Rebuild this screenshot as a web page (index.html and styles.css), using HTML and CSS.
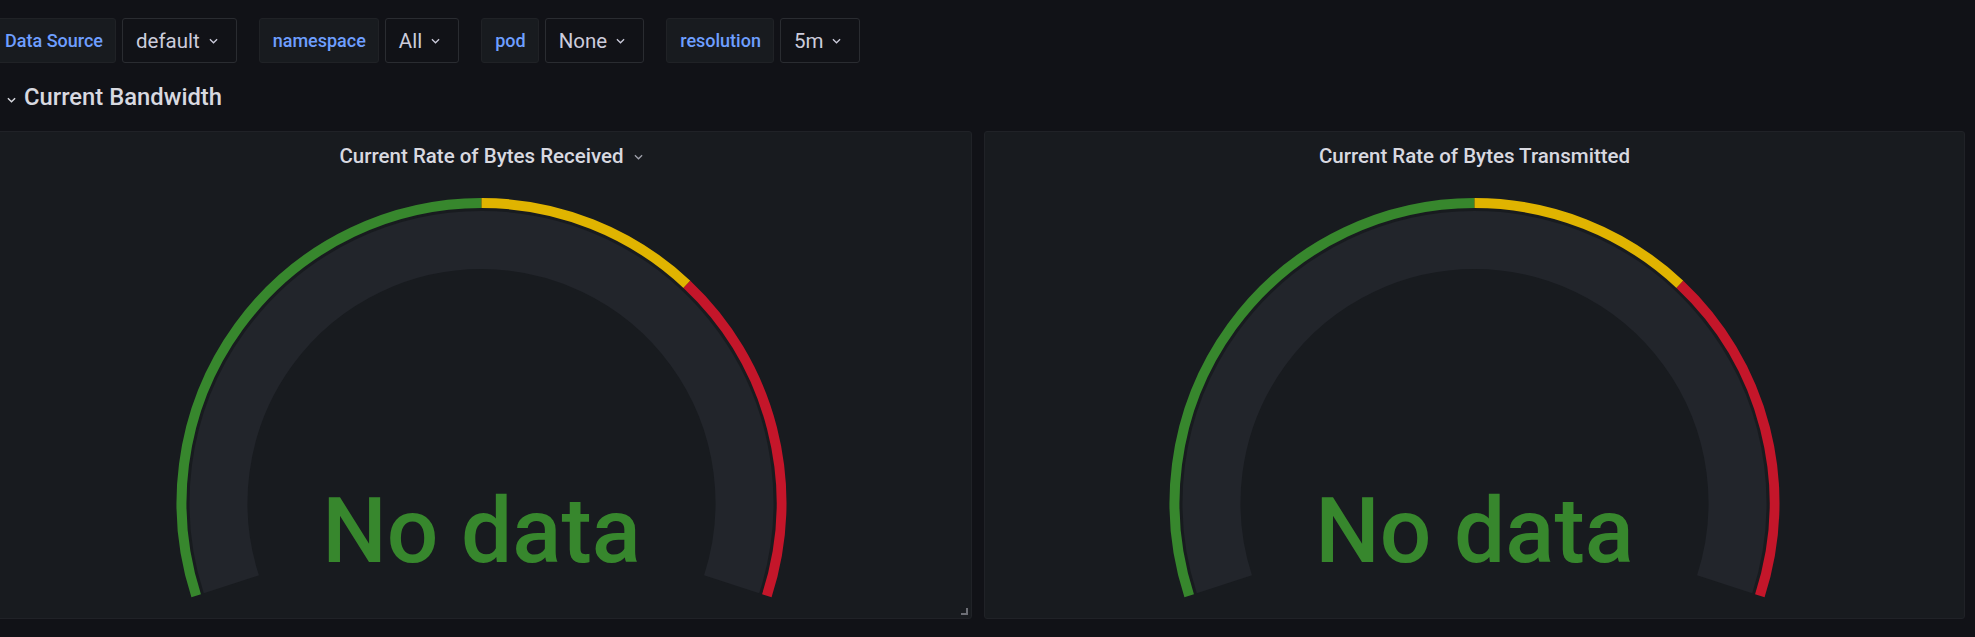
FILE: index.html
```html
<!DOCTYPE html>
<html lang="en">
<head>
<meta charset="utf-8">
<title>Current Bandwidth</title>
<link rel="stylesheet" href="styles.css">
</head>
<body>
<div class="page">
  <div class="vars">
    <div class="var-group">
      <span class="var-label">Data Source</span>
      <span class="var-value">default<svg class="chev" viewBox="0 0 10 6"><polyline points="1,1 5,5 9,1"/></svg></span>
    </div>
    <div class="var-group">
      <span class="var-label">namespace</span>
      <span class="var-value">All<svg class="chev" viewBox="0 0 10 6"><polyline points="1,1 5,5 9,1"/></svg></span>
    </div>
    <div class="var-group">
      <span class="var-label">pod</span>
      <span class="var-value">None<svg class="chev" viewBox="0 0 10 6"><polyline points="1,1 5,5 9,1"/></svg></span>
    </div>
    <div class="var-group">
      <span class="var-label">resolution</span>
      <span class="var-value">5m<svg class="chev" viewBox="0 0 10 6"><polyline points="1,1 5,5 9,1"/></svg></span>
    </div>
  </div>

  <div class="row-header">
    <svg class="row-chev" viewBox="0 0 10 6"><polyline points="1,1 5,5 9,1"/></svg>
    <span class="row-title">Current Bandwidth</span>
  </div>

  <div class="panels">
    <section class="panel">
      <header class="panel-header">
        <span class="panel-title">Current Rate of Bytes Received<svg class="title-chev" viewBox="0 0 10 6"><polyline points="1,1 5,5 9,1"/></svg></span>
      </header>
      <div class="panel-body">
        <svg class="gauge" viewBox="0 0 981 447" width="981" height="447">
          <path class="g-bg" d="M240.37 413.27 A263 263 0 1 1 740.63 413.27"/>
          <path class="g-green" d="M205.18 424.71 A300 300 0 0 1 490.5 32"/>
          <path class="g-yellow" d="M490.5 32 A300 300 0 0 1 695.87 113.31"/>
          <path class="g-red" d="M695.87 113.31 A300 300 0 0 1 775.82 424.71"/>
          <text class="g-text" x="490.5" y="391" text-anchor="middle">No data</text>
        </svg>
      </div>
      <span class="resize-handle"></span>
    </section>
    <section class="panel">
      <header class="panel-header">
        <span class="panel-title">Current Rate of Bytes Transmitted</span>
      </header>
      <div class="panel-body">
        <svg class="gauge" viewBox="0 0 981 447" width="981" height="447">
          <path class="g-bg" d="M240.37 413.27 A263 263 0 1 1 740.63 413.27"/>
          <path class="g-green" d="M205.18 424.71 A300 300 0 0 1 490.5 32"/>
          <path class="g-yellow" d="M490.5 32 A300 300 0 0 1 695.87 113.31"/>
          <path class="g-red" d="M695.87 113.31 A300 300 0 0 1 775.82 424.71"/>
          <text class="g-text" x="490.5" y="391" text-anchor="middle">No data</text>
        </svg>
      </div>
    </section>
  </div>
</div>
</body>
</html>
```

FILE: styles.css
```css
html, body {
  margin: 0;
  padding: 0;
  background: #111217;
  overflow: hidden;
}

body {
  font-family: Roboto, "Liberation Sans", sans-serif;
  color: #ccccdc;
  width: 1975px;
  height: 637px;
}

.page {
  margin-left: -9px;
  width: 1974px;
  padding-top: 18px;
}

/* variables bar */
.vars {
  display: flex;
  gap: 22px;
  height: 45px;
}

.var-group {
  display: flex;
  gap: 6px;
  height: 45px;
}

.var-label {
  display: flex;
  align-items: center;
  box-sizing: border-box;
  height: 45px;
  padding: 0 12px 0 13px;
  background: #181b1f;
  border: 1px solid #202226;
  border-radius: 3px;
  color: #6e9fff;
  font-size: 18px;
  font-weight: 500;
}

.var-value {
  display: flex;
  align-items: center;
  box-sizing: border-box;
  height: 45px;
  padding: 0 18px 0 13px;
  background: #111217;
  border: 1px solid #2a2c31;
  border-radius: 3px;
  color: #ccccdc;
  font-size: 20.5px;
  font-weight: 400;
}

.chev {
  width: 9px;
  height: 6px;
  margin-left: 9px;
  fill: none;
  stroke: #ccccdc;
  stroke-width: 1.4;
}

/* row header */
.row-header {
  display: flex;
  align-items: center;
  margin-top: 20px;
  height: 28px;
  padding-left: 16px;
}

.row-chev {
  width: 9px;
  height: 6px;
  margin-top: 6px;
  margin-right: 8px;
  fill: none;
  stroke: #d8d9e0;
  stroke-width: 1.6;
}

.row-title {
  font-size: 23.8px;
  line-height: 28px;
  font-weight: 500;
  color: #d8d9e0;
}

/* panels */
.panels {
  display: grid;
  grid-template-columns: 981px 981px;
  gap: 12px;
  margin-top: 20px;
}

.panel {
  position: relative;
  box-sizing: border-box;
  height: 488px;
  display: flex;
  flex-direction: column;
  background: #181b1f;
  border: 1px solid #202227;
  border-radius: 3px;
}

.panel-header {
  box-sizing: border-box;
  height: 39px;
  padding-top: 12px;
  text-align: center;
}

.panel-title {
  position: relative;
  font-size: 20.5px;
  line-height: 24px;
  font-weight: 500;
  color: #d8d9e0;
}

.title-chev {
  position: absolute;
  left: calc(100% + 10px);
  top: 10px;
  width: 9px;
  height: 6px;
  fill: none;
  stroke: #9fa1ab;
  stroke-width: 1.4;
}

.panel-body {
  flex: 1;
  display: flex;
  justify-content: center;
  margin-left: -1px;
  margin-right: -1px;
}

.gauge {
  display: block;
  overflow: visible;
}

.g-bg {
  fill: none;
  stroke: #22252b;
  stroke-width: 58;
}

.g-green, .g-yellow, .g-red {
  fill: none;
  stroke-width: 10;
}

.g-green { stroke: #37872d; }
.g-yellow { stroke: #e0b400; }
.g-red { stroke: #c4162a; }

.g-text {
  font-family: Roboto, "Liberation Sans", sans-serif;
  font-size: 91px;
  font-weight: 500;
  fill: #37872d;
}

.resize-handle {
  position: absolute;
  right: 3px;
  bottom: 3px;
  width: 5px;
  height: 5px;
  border-right: 2px solid #6c6e75;
  border-bottom: 2px solid #6c6e75;
}
```
